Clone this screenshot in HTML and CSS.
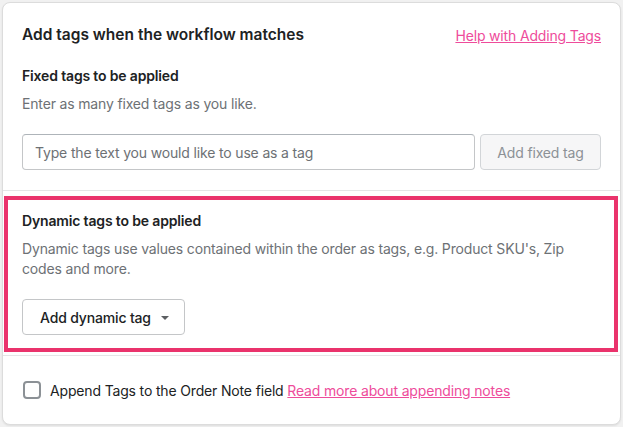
FILE: index.html
```html
<!DOCTYPE html>
<html>
<head>
<meta charset="utf-8">
<link rel="stylesheet" href="styles.css">
</head>
<body>
<div class="card">
  <div class="section">
    <div class="header">
      <h2 class="title">Add tags when the workflow matches</h2>
      <a class="link" href="#">Help with Adding Tags</a>
    </div>
    <h3 class="subtitle">Fixed tags to be applied</h3>
    <p class="desc">Enter as many fixed tags as you like.</p>
    <div class="input-row">
      <div class="input">Type the text you would like to use as a tag</div>
      <button class="btn btn-disabled">Add fixed tag</button>
    </div>
  </div>
  <div class="divider"></div>
  <div class="section highlight">
    <h3 class="subtitle">Dynamic tags to be applied</h3>
    <p class="desc">Dynamic tags use values contained within the order as tags, e.g. Product SKU's, Zip codes and more.</p>
    <button class="btn btn-dropdown">Add dynamic tag <span class="caret"></span></button>
  </div>
  <div class="divider"></div>
  <div class="section footer">
    <label class="check-row">
      <span class="checkbox"></span>
      <span class="check-label">Append Tags to the Order Note field <a class="link" href="#">Read more about appending notes</a></span>
    </label>
  </div>
</div>
</body>
</html>
```

FILE: styles.css
```css
* { box-sizing: border-box; }
html, body { margin: 0; padding: 0; }
body {
  background: #f1f1f1;
  font-family: Inter, "Noto Sans", sans-serif;
  color: #202223;
  padding: 2px;
  letter-spacing: -0.16px;
}
.card {
  background: #fff;
  border: 1px solid #dcdcdc;
  border-radius: 8px;
  box-shadow: 0 1px 2px rgba(0,0,0,0.08);
  height: 423px;
  overflow: hidden;
}
.section { padding: 20px 19px 20px 19px; }
.header {
  display: flex;
  justify-content: space-between;
  align-items: center;
  height: 24px;
}
.title {
  margin: 0;
  font-size: 15.5px;
  font-weight: 600;
  line-height: 24px;
  letter-spacing: 0;
}
.link {
  color: #ee4c9b;
  font-size: 14px;
  text-decoration: underline;
}
.subtitle {
  margin: 19px 0 0 0;
  font-size: 14px;
  font-weight: 600;
  line-height: 20px;
}
.desc {
  margin: 8px 0 0 0;
  font-size: 14px;
  line-height: 20px;
  color: #6d7175;
}
.input-row {
  display: flex;
  gap: 5px;
  margin-top: 20px;
}
.input {
  flex: 1;
  height: 36px;
  border: 1px solid #c4c6c8;
  border-top-color: #aeb4b9;
  border-radius: 4px;
  padding: 0 12px;
  display: flex;
  align-items: center;
  font-size: 14px;
  color: #6d7175;
}
.btn {
  font-family: inherit;
  font-size: 14px;
  letter-spacing: -0.16px;
  height: 36px;
  border-radius: 4px;
  padding: 0 16px;
  display: flex;
  align-items: center;
  white-space: nowrap;
  flex-shrink: 0;
  background: #fff;
  border: 1px solid #c4c6c8;
  color: #202223;
}
.btn-disabled {
  width: 121px;
  justify-content: center;
  background: #f6f6f7;
  border-color: #d2d5d8;
  color: #8c9196;
}
.divider { height: 1px; background: #e4e5e7; }
.highlight {
  margin: 5px 2px 3px 1px;
  border: 4px solid #ea336c;
  padding: 11px 14px 13px 14px;
}
.highlight .subtitle { margin-top: 0; }
.btn-dropdown {
  margin-top: 20px;
  width: 163px;
  font-weight: 500;
  padding: 0 0 0 17px;
  gap: 10px;
}
.caret {
  width: 0; height: 0;
  border-left: 4px solid transparent;
  border-right: 4px solid transparent;
  border-top: 4px solid #5c5f62;
  margin-top: 1px;
}
.footer { padding: 20px 19px; }
.check-row {
  display: flex;
  align-items: center;
  height: 28px;
  gap: 9px;
}
.checkbox {
  width: 18px; height: 18px;
  border: 2px solid #8c9196;
  border-radius: 4px;
  margin-left: 1px;
}
.check-label { font-size: 14px; color: #202223; }
```
